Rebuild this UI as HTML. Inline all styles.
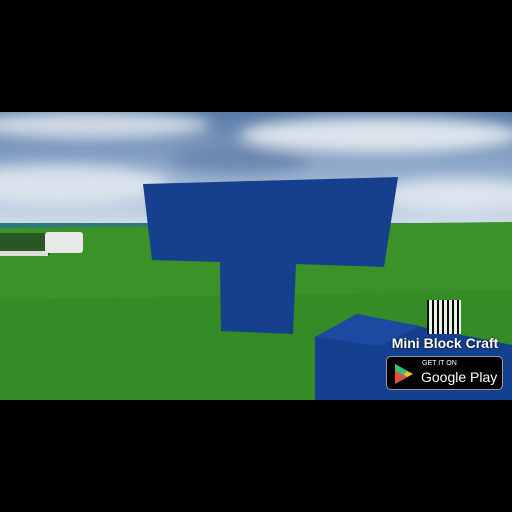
<!DOCTYPE html>
<html><head><style>
body{margin:0;width:512px;height:512px;background:#000;position:relative;overflow:hidden;font-family:"Liberation Sans",sans-serif}
.a{position:absolute}
</style></head><body>
<div class="a" style="left:0;top:112px;width:512px;height:288px;overflow:hidden;background:linear-gradient(#5a7aa6 0px,#7f9bc0 40px,#a9bfd8 80px,#cfdbe8 112px)">
<svg class="a" style="left:0;top:0" width="512" height="288" viewBox="0 112 512 288">
<defs><filter id="b"><feGaussianBlur stdDeviation="7"/></filter></defs>
<g filter="url(#b)">
<ellipse cx="90" cy="125" rx="120" ry="14" fill="#e8edf3" opacity=".8"/>
<ellipse cx="380" cy="135" rx="140" ry="18" fill="#eef2f6" opacity=".85"/>
<ellipse cx="60" cy="185" rx="110" ry="20" fill="#e8edf3" opacity=".8"/>
<ellipse cx="460" cy="195" rx="80" ry="16" fill="#e8edf3" opacity=".8"/>
<ellipse cx="240" cy="160" rx="70" ry="14" fill="#4e6e9a" opacity=".5"/>
</g>
<rect x="0" y="223" width="512" height="8" fill="#2d7a7a"/>
<polygon points="0,228 512,222 512,400 0,400" fill="#3a9228"/>
<polygon points="0,300 512,290 512,400 0,400" fill="#358a24" opacity=".8"/>
<rect x="0" y="233" width="50" height="22" fill="#1d2e22" opacity=".6"/>
<rect x="0" y="251" width="48" height="5" fill="#dcdcdc"/>
<rect x="45" y="232" width="38" height="21" rx="3" fill="#e8e8e8"/>
<polygon points="143,184 398,177 384,267 296,264 293,334 221,331 220,262 152,260" fill="#163f8e"/>
<polygon points="315,337 357,314 512,345 512,400 315,400" fill="#15408f"/>
<polygon points="315,337 357,314 420,326 380,346" fill="#1b4aa0"/>
</svg>
<div class="a" style="left:427px;top:188px;width:34px;height:34px;background:#fff;
background-image:repeating-linear-gradient(90deg,#000 0 2px,transparent 2px 5px),repeating-linear-gradient(0deg,#fff 0 2px,transparent 2px 4px);opacity:.9"></div>
<div class="a" style="left:380px;top:223px;width:130px;text-align:center;color:#fff;font-weight:bold;font-size:14px;text-shadow:0 0 2px #000;white-space:nowrap">Mini Block Craft</div>
<div class="a" style="left:386px;top:244px;width:115px;height:32px;background:#000;border:1px solid #999;border-radius:5px">
<svg class="a" style="left:6px;top:6px" width="22" height="22" viewBox="0 0 22 22"><polygon points="2,1 20,11 2,21" fill="#2bb5e6"/><polygon points="2,1 14,8 2,14" fill="#35c26b"/><polygon points="2,21 14,14 2,8" fill="#e94c3d"/><polygon points="14,8 20,11 14,14 11,11" fill="#f5c11a"/></svg>
<div class="a" style="left:35px;top:3px;color:#fff;font-size:7px;white-space:nowrap">GET IT ON</div>
<div class="a" style="left:34px;top:12px;color:#fff;font-size:14px;white-space:nowrap">Google Play</div>
</div>
</div>
</body></html>
